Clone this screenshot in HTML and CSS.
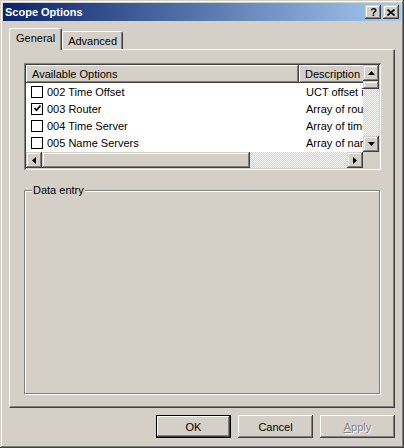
FILE: index.html
```html
<!DOCTYPE html>
<html lang="en">
<head>
  <meta charset="UTF-8" />
  <title>Scope Options</title>
  <link rel="stylesheet" href="styles.css">
</head>
<body>
  <div class="window">
    <div class="titlebar">
      <span class="title">Scope Options</span>
      <div class="caption-btns">
        <span class="cap-btn help">?</span>
        <span class="cap-btn">
          <svg width="8" height="7" viewBox="0 0 8 7"><path d="M0.5 0.5 L7.5 6.5 M7.5 0.5 L0.5 6.5" stroke="#000" stroke-width="1.6" fill="none"/></svg>
        </span>
      </div>
    </div>

    <div class="body">
      <div class="tabs">
        <div class="tab active">General</div>
        <div class="tab">Advanced</div>
      </div>

      <div class="panel">
        <div class="list">
          <div class="list-main">
            <div class="list-header">
              <div class="hcell">Available Options</div>
              <div class="hcell">Description</div>
            </div>
            <div class="row">
              <div class="cell"><span class="check"></span>002 Time Offset</div>
              <div class="cell desc">UCT offset in seconds</div>
            </div>
            <div class="row">
              <div class="cell">
                <span class="check">
                  <svg width="9" height="9" viewBox="0 0 9 9"><path d="M1.5 4 L3.5 6.3 L7.5 1.5" stroke="#000" stroke-width="1.7" fill="none"/></svg>
                </span>003 Router
              </div>
              <div class="cell desc">Array of router addresses</div>
            </div>
            <div class="row">
              <div class="cell"><span class="check"></span>004 Time Server</div>
              <div class="cell desc">Array of time server addresses</div>
            </div>
            <div class="row">
              <div class="cell"><span class="check"></span>005 Name Servers</div>
              <div class="cell desc">Array of name servers</div>
            </div>
          </div>

          <div class="vscroll">
            <div class="sbtn">
              <svg width="7" height="4" viewBox="0 0 7 4"><polygon points="3.5,0 7,4 0,4" fill="#000"/></svg>
            </div>
            <div class="thumb v"></div>
            <div class="track"></div>
            <div class="sbtn">
              <svg width="7" height="4" viewBox="0 0 7 4"><polygon points="0,0 7,0 3.5,4" fill="#000"/></svg>
            </div>
          </div>

          <div class="hscroll">
            <div class="sbtn">
              <svg width="4" height="7" viewBox="0 0 4 7"><polygon points="0,3.5 4,0 4,7" fill="#000"/></svg>
            </div>
            <div class="thumb h"></div>
            <div class="track"></div>
            <div class="sbtn">
              <svg width="4" height="7" viewBox="0 0 4 7"><polygon points="0,0 4,3.5 0,7" fill="#000"/></svg>
            </div>
          </div>

          <div class="corner"></div>
        </div>

        <div class="group">
          <span class="group-label">Data entry</span>
        </div>
      </div>

      <div class="buttons">
        <button class="btn default">OK</button>
        <button class="btn">Cancel</button>
        <button class="btn disabled"><u>A</u>pply</button>
      </div>
    </div>
  </div>
</body>
</html>
```

FILE: styles.css
```css
body {
  margin: 0;
  font-family: 'Liberation Sans', Arial, sans-serif;
  font-size: 11px;
  color: #000;
  background: #d4d0c8;
}

.window {
  width: 404px;
  height: 448px;
  box-sizing: border-box;
  padding: 3px;
  background: #d4d0c8;
  box-shadow: inset -1px -1px #404040, inset 1px 1px #d4d0c8,
              inset -2px -2px #808080, inset 2px 2px #fff;
  display: flex;
  flex-direction: column;
}

/* title bar */
.titlebar {
  height: 18px;
  flex: none;
  display: flex;
  align-items: center;
  justify-content: space-between;
  padding: 0 2px;
  background: linear-gradient(to right, #0a246a, #a6caf0);
}

.title {
  color: #fff;
  font-weight: bold;
  font-size: 11px;
  line-height: 18px;
}

.caption-btns {
  display: flex;
  gap: 2px;
}

.cap-btn {
  width: 16px;
  height: 14px;
  box-sizing: border-box;
  display: flex;
  align-items: center;
  justify-content: center;
  background: #d4d0c8;
  box-shadow: inset -1px -1px #404040, inset 1px 1px #d4d0c8,
              inset -2px -2px #808080, inset 2px 2px #fff;
}

.cap-btn.help {
  font-weight: bold;
  font-size: 11px;
  line-height: 14px;
  padding-left: 1px;
}

/* dialog body */
.body {
  flex: 1;
  display: flex;
  flex-direction: column;
  padding: 7px 6px 7px 6px;
}

.tabs {
  height: 21px;
  flex: none;
  display: flex;
  align-items: flex-end;
}

.tab {
  height: 18px;
  line-height: 18px;
  box-sizing: border-box;
  padding: 0 5px;
  border-top: 1px solid #fff;
  border-left: 1px solid #fff;
  border-right: 1px solid #404040;
  border-radius: 2px 2px 0 0;
  box-shadow: inset -1px 0 #808080;
  background: #d4d0c8;
}

.tab.active {
  height: 22px;
  line-height: 19px;
  padding: 0 6px;
  margin-bottom: -1px;
  position: relative;
  z-index: 1;
}

.panel {
  flex: 1;
  display: flex;
  flex-direction: column;
  padding: 13px 13px 13px 14px;
  border-top: 1px solid #fff;
  border-left: 1px solid #fff;
  border-right: 1px solid #404040;
  border-bottom: 1px solid #404040;
  box-shadow: inset -1px -1px #808080;
}

/* list view */
.list {
  width: 357px;
  height: 107px;
  box-sizing: border-box;
  flex: none;
  padding: 2px;
  background: #fff;
  box-shadow: inset 1px 1px #808080, inset -1px -1px #fff,
              inset 2px 2px #404040, inset -2px -2px #d4d0c8;
  display: grid;
  grid-template-columns: 337px 16px;
  grid-template-rows: 87px 16px;
}

.list-main {
  overflow: hidden;
}

.list-header,
.row {
  display: grid;
  grid-template-columns: 273px 90px;
  white-space: nowrap;
}

.list-header {
  height: 18px;
}

.hcell {
  line-height: 18px;
  padding-left: 6px;
  background: #d4d0c8;
  box-shadow: inset -1px -1px #404040, inset 1px 1px #fff,
              inset -2px -2px #808080;
}

.row {
  height: 17px;
}

.cell {
  display: flex;
  align-items: center;
  overflow: hidden;
}

.cell.desc {
  padding-left: 7px;
}

.check {
  width: 12px;
  height: 12px;
  box-sizing: border-box;
  border: 1px solid #000;
  background: #fff;
  margin: 0 4px 0 5px;
  display: flex;
  align-items: center;
  justify-content: center;
}

/* scroll bars */
.vscroll {
  display: flex;
  flex-direction: column;
}

.hscroll {
  display: flex;
}

.sbtn,
.thumb {
  width: 16px;
  height: 16px;
  flex: none;
  box-sizing: border-box;
  display: flex;
  align-items: center;
  justify-content: center;
  background: #d4d0c8;
  box-shadow: inset -1px -1px #404040, inset 1px 1px #d4d0c8,
              inset -2px -2px #808080, inset 2px 2px #fff;
}

.thumb.v {
  height: 8px;
}

.thumb.h {
  width: 208px;
}

.track {
  flex: 1;
  background: repeating-conic-gradient(#d4d0c8 0 25%, #fff 0 50%) 0 0 / 2px 2px;
}

.corner {
  background: #d4d0c8;
}

/* group box */
.group {
  flex: 1;
  position: relative;
  margin: 20px 1px 0 0;
  border: 1px solid #808080;
  box-shadow: inset 1px 1px #fff, 1px 1px #fff;
}

.group-label {
  position: absolute;
  top: -7px;
  left: 7px;
  padding: 0 1px;
  line-height: 13px;
  background: #d4d0c8;
}

/* buttons */
.buttons {
  flex: none;
  display: flex;
  justify-content: flex-end;
  gap: 7px;
  margin-top: 7px;
}

.btn {
  width: 75px;
  height: 23px;
  border: none;
  padding: 0;
  font-family: inherit;
  font-size: 11px;
  color: #000;
  background: #d4d0c8;
  box-shadow: inset -1px -1px #404040, inset 1px 1px #fff,
              inset -2px -2px #808080;
}

.btn.default {
  box-shadow: inset 0 0 0 1px #000, inset -2px -2px #404040,
              inset 2px 2px #fff, inset -3px -3px #808080;
}

.btn.disabled {
  color: #808080;
  text-shadow: 1px 1px #fff;
}
```
